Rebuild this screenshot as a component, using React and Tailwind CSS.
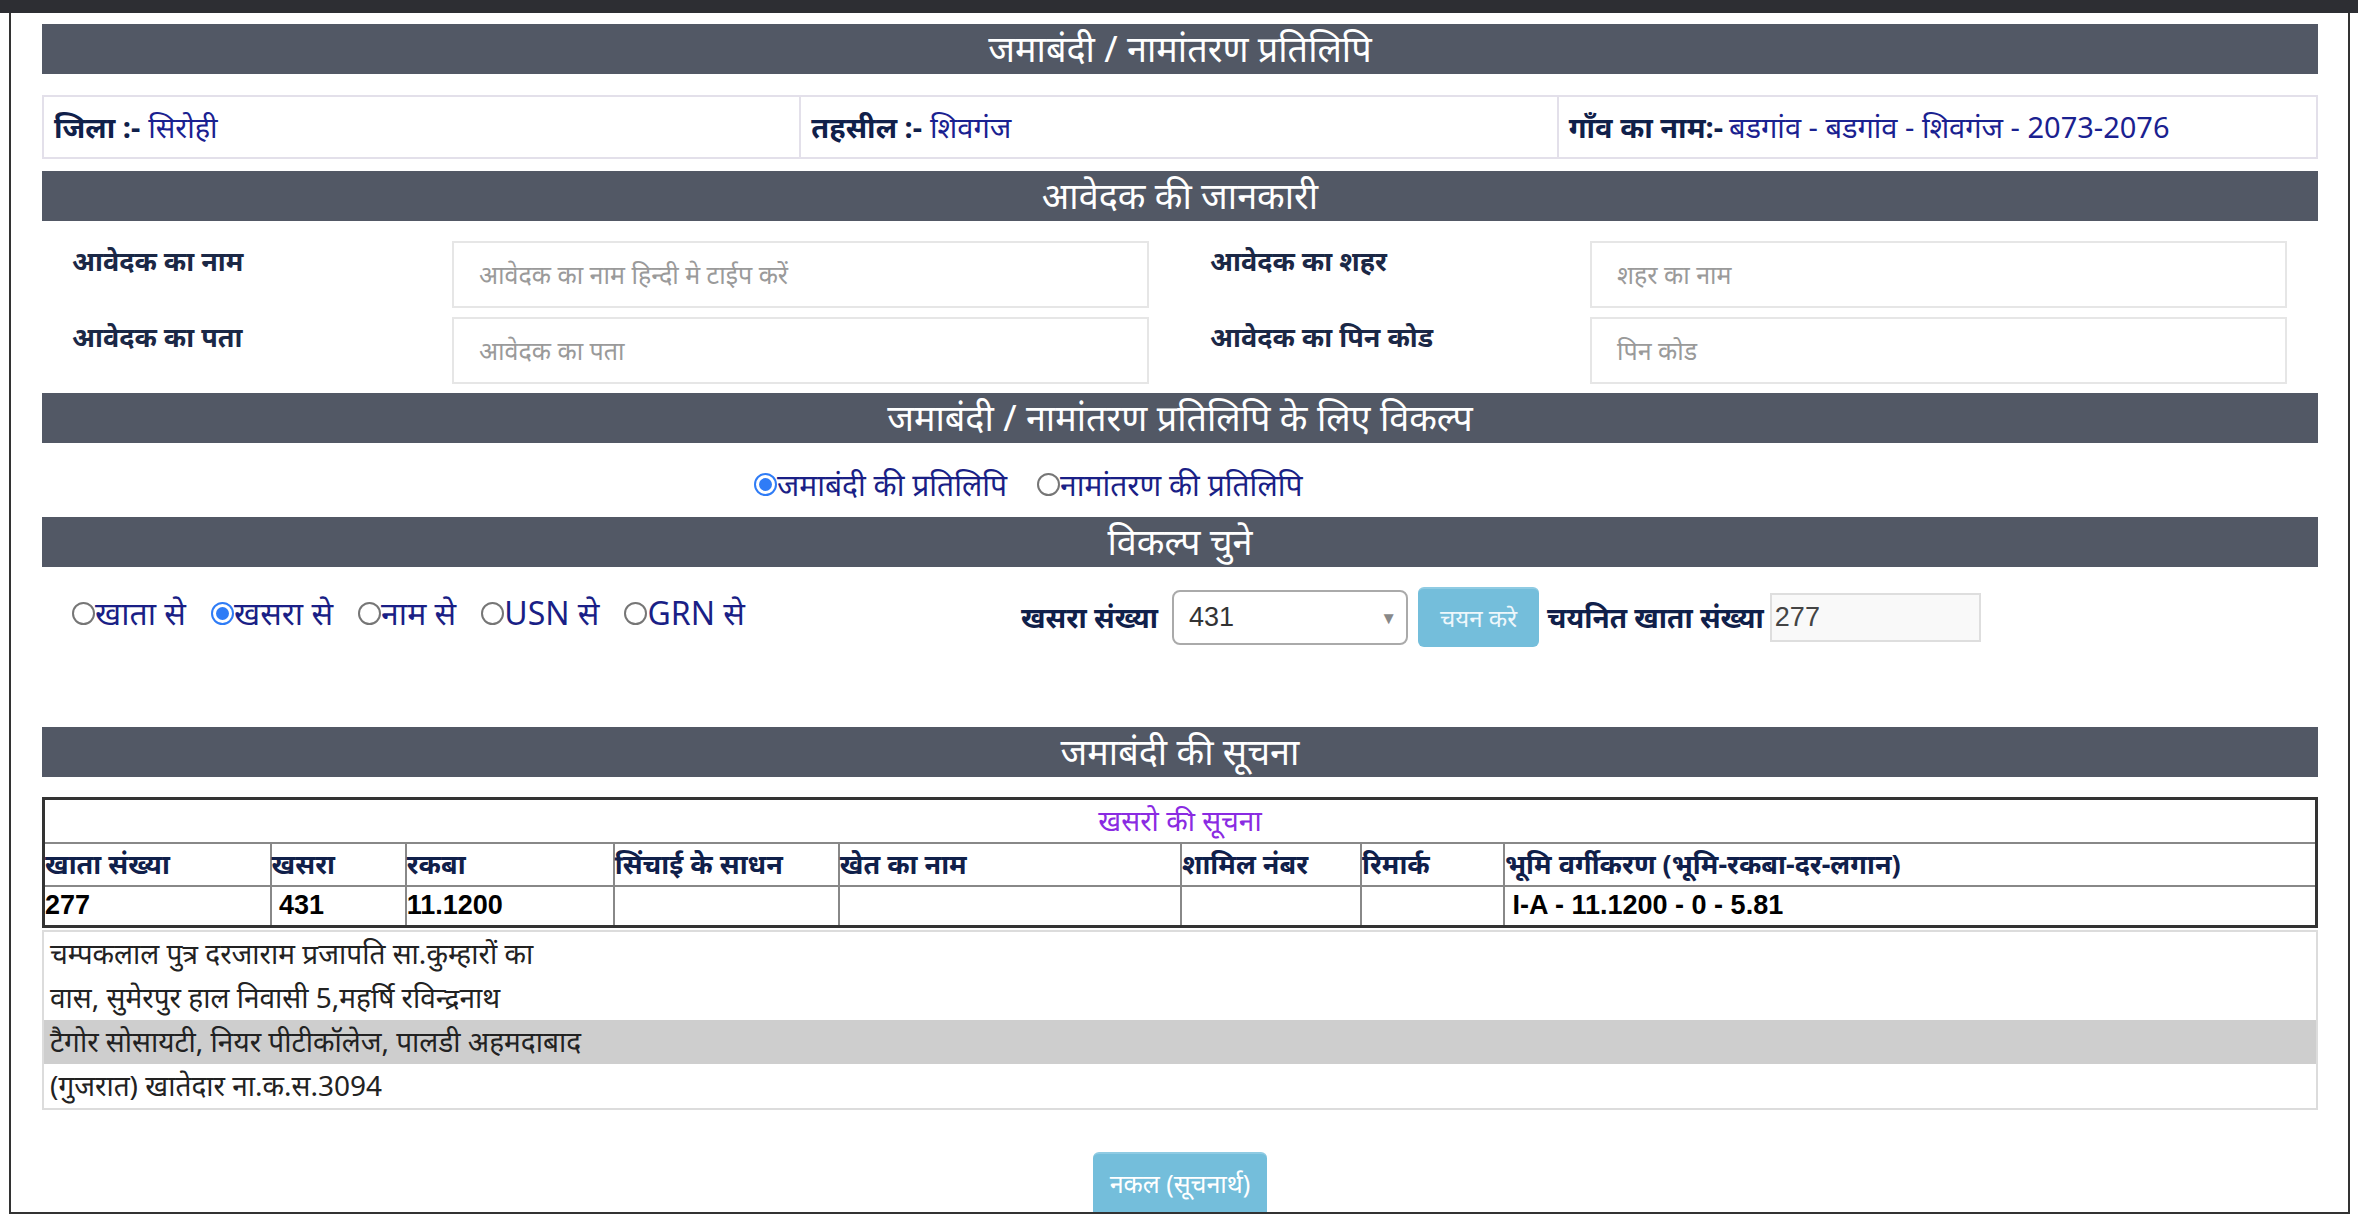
import React from 'react';

const font = { fontFamily: '"Noto Sans", "Liberation Sans", sans-serif' };
const latin = { fontFamily: '"Liberation Sans", "Noto Sans", sans-serif' };

const SectionHeader = ({ title, className = '' }) => (
  <div className={`h-[50px] bg-[#525865] flex items-center justify-center text-white text-[36px] leading-none ${className}`}>
    {title}
  </div>
);

const Radio = ({ checked, label }) => (
  <label className="flex items-center text-[#1a1f86]">
    {checked ? (
      <div className="w-[23px] h-[23px] rounded-full border-[2.5px] border-[#2f7cf6] bg-white flex items-center justify-center shrink-0">
        <div className="w-[13px] h-[13px] rounded-full bg-[#2f7cf6]" />
      </div>
    ) : (
      <div className="w-[23px] h-[23px] rounded-full border-2 border-[#767676] bg-white shrink-0" />
    )}
    <span>{label}</span>
  </label>
);

const FormField = ({ label, placeholder }) => (
  <div className="flex items-start h-[67px]">
    <div className="w-[410px] pl-[30px] font-bold text-[27px] text-[#1b2846]">{label}</div>
    <div className="w-[697px] h-[67px] border-2 border-[#e6e6e6] flex items-center pl-[25px] text-[25px] text-[#9a9a9a]">
      {placeholder}
    </div>
  </div>
);

export default function App() {
  const cols = [227, 135, 208, 225, 342, 180, 143, 812];
  const heads = ['खाता संख्या', 'खसरा', 'रकबा', 'सिंचाई के साधन', 'खेत का नाम', 'शामिल नंबर', 'रिमार्क', 'भूमि वर्गीकरण (भूमि-रकबा-दर-लगान)'];
  const row = ['277', '\u00a0431', '11.1200', '', '', '', '', '\u00a0I-A - 11.1200 - 0 - 5.81'];
  const address = [
    'चम्पकलाल पुत्र दरजाराम प्रजापति सा.कुम्हारों का',
    'वास, सुमेरपुर हाल निवासी 5,महर्षि रविन्द्रनाथ',
    'टैगोर सोसायटी, नियर पीटीकॉलेज, पालडी अहमदाबाद',
    '(गुजरात) खातेदार ना.क.स.3094',
  ];

  return (
    <div className="w-[2358px] h-[1222px] bg-white overflow-hidden" style={font}>
      <div className="h-[13px] bg-[#2d2e33]" />
      <div className="ml-[9px] mr-[8px] h-[1201px] border-x-2 border-b-2 border-[#333] pl-[31px] pr-[30px] pt-[11px] flex flex-col">
        <SectionHeader title="जमाबंदी / नामांतरण प्रतिलिपि" />

        <div className="mt-[21px] h-[64px] border-2 border-[#e3e0ea] grid grid-cols-3 text-[29px]">
          <div className="flex items-center pl-[10px] border-r-2 border-[#e3e0ea]">
            <span className="font-bold text-[#10204a]">जिला :-</span>
            <span className="ml-[8px] text-[#1a2190]">सिरोही</span>
          </div>
          <div className="flex items-center pl-[10px] border-r-2 border-[#e3e0ea]">
            <span className="font-bold text-[#10204a]">तहसील :-</span>
            <span className="ml-[8px] text-[#1a2190]">शिवगंज</span>
          </div>
          <div className="flex items-center pl-[10px]">
            <span className="font-bold text-[#10204a]">गाँव का नाम:-</span>
            <span className="ml-[6px] text-[#1a2190]">बडगांव - बडगांव - शिवगंज - 2073-2076</span>
          </div>
        </div>

        <SectionHeader title="आवेदक की जानकारी" className="mt-[12px]" />

        <div className="mt-[20px] grid grid-cols-2">
          <div className="flex flex-col gap-[9px]">
            <FormField label="आवेदक का नाम" placeholder="आवेदक का नाम हिन्दी मे टाईप करें" />
            <FormField label="आवेदक का पता" placeholder="आवेदक का पता" />
          </div>
          <div className="flex flex-col gap-[9px]">
            <FormField label="आवेदक का शहर" placeholder="शहर का नाम" />
            <FormField label="आवेदक का पिन कोड" placeholder="पिन कोड" />
          </div>
        </div>

        <SectionHeader title="जमाबंदी / नामांतरण प्रतिलिपि के लिए विकल्प" className="mt-[9px]" />

        <div className="h-[74px] flex items-center pl-[712px] pt-[8px] gap-[30px] text-[30px]">
          <Radio checked label="जमाबंदी की प्रतिलिपि" />
          <Radio label="नामांतरण की प्रतिलिपि" />
        </div>

        <SectionHeader title="विकल्प चुने" />

        <div className="h-[160px] flex items-start pt-[20px]">
          <div className="w-[979px] flex items-center gap-[25px] pl-[30px] pt-[2px] text-[32px]">
            <Radio label="खाता से" />
            <Radio checked label="खसरा से" />
            <Radio label="नाम से" />
            <Radio label="USN से" />
            <Radio label="GRN से" />
          </div>
          <div className="flex items-center">
            <span className="font-bold text-[28px] text-[#10204a] mr-[14px]">खसरा संख्या</span>
            <div className="w-[236px] h-[55px] border-2 border-[#aaa] rounded-[8px] flex items-center justify-between pl-[15px] pr-[9px]">
              <span className="text-[27px] text-[#333]" style={latin}>431</span>
              <span className="text-[17px] text-[#888] leading-none">▼</span>
            </div>
            <button className="ml-[10px] w-[121px] h-[60px] rounded-[6px] bg-[#74bedb] border-t-2 border-[#8fcbe3] text-[24px] text-[#eef7fb]">
              चयन करे
            </button>
            <span className="ml-[8px] font-bold text-[28px] text-[#10204a]">चयनित खाता संख्या</span>
            <div className="ml-[6px] w-[211px] h-[49px] bg-[#f9f9f9] border-2 border-[#dedede] flex items-center pl-[3px] text-[27px] text-[#444]" style={latin}>
              277
            </div>
          </div>
        </div>

        <SectionHeader title="जमाबंदी की सूचना" />

        <table className="mt-[20px] w-full table-fixed border-collapse border-[3px] border-[#333] text-[27px] leading-tight">
          <colgroup>
            {cols.map((w, i) => (
              <col key={i} style={{ width: w }} />
            ))}
          </colgroup>
          <tbody>
            <tr className="h-[44px]">
              <td colSpan={8} className="p-0 text-center italic text-[28px] text-[#8a2be2] border-b-2 border-[#888]">खसरो की सूचना</td>
            </tr>
            <tr className="h-[43px]">
              {heads.map((h, i) => (
                <td key={i} className="font-bold text-[#10204a] border-2 border-[#888] p-0 whitespace-nowrap">{h}</td>
              ))}
            </tr>
            <tr className="h-[41px]">
              {row.map((c, i) => (
                <td key={i} className="font-bold text-black border-2 border-[#888] border-b-0 p-0" style={latin}>{c}</td>
              ))}
            </tr>
          </tbody>
        </table>

        <div className="mt-[2px] border-2 border-[#dcdcdc] text-[28px] text-[#222]">
          {address.map((line, i) => (
            <div key={i} className={`h-[44px] flex items-center pl-[6px] pb-[3px] ${i === 2 ? 'bg-[#cecece]' : ''}`}>{line}</div>
          ))}
        </div>

        <div className="mt-auto flex justify-center">
          <button className="w-[174px] h-[60px] rounded-t-[6px] bg-[#74bedb] border-t-2 border-[#8fcbe3] text-[25px] text-white leading-none">
            नकल (सूचनार्थ)
          </button>
        </div>
      </div>
    </div>
  );
}
